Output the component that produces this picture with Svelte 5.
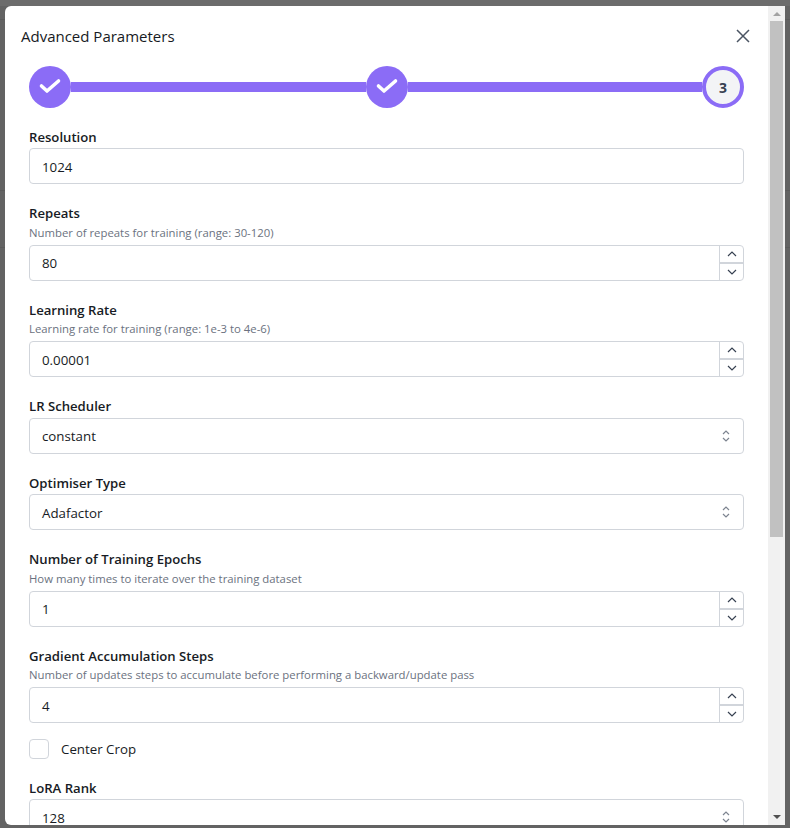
<script>
    const fields = [
        { label: "Resolution", value: "1024", kind: "text" },
        { label: "Repeats", help: "Number of repeats for training (range: 30-120)", value: "80", kind: "number" },
        { label: "Learning Rate", help: "Learning rate for training (range: 1e-3 to 4e-6)", value: "0.00001", kind: "number" },
        { label: "LR Scheduler", value: "constant", kind: "select" },
        { label: "Optimiser Type", value: "Adafactor", kind: "select" },
        { label: "Number of Training Epochs", help: "How many times to iterate over the training dataset", value: "1", kind: "number" },
        { label: "Gradient Accumulation Steps", help: "Number of updates steps to accumulate before performing a backward/update pass", value: "4", kind: "number" },
        { check: "Center Crop" },
        { label: "LoRA Rank", value: "128", kind: "select" }
    ];
</script>

<div class="backdrop">
    <div class="modal">
        <div class="content">
            <header>
                <h2>Advanced Parameters</h2>
                <svg class="close" width="14" height="14" viewBox="0 0 14 14"><path d="M1 1l12 12M13 1L1 13" stroke="#4b5563" stroke-width="1.5" fill="none" /></svg>
            </header>

            <div class="stepper">
                <span class="step done"><svg width="24" height="24" viewBox="0 0 24 24"><path d="M3.5 11l5.5 5L20.5 6" stroke="#fff" stroke-width="3.6" stroke-linecap="round" stroke-linejoin="round" fill="none" /></svg></span>
                <span class="line"></span>
                <span class="step done"><svg width="24" height="24" viewBox="0 0 24 24"><path d="M3.5 11l5.5 5L20.5 6" stroke="#fff" stroke-width="3.6" stroke-linecap="round" stroke-linejoin="round" fill="none" /></svg></span>
                <span class="line"></span>
                <span class="step current">3</span>
            </div>

            <div class="form">
                {#each fields as f}
                    {#if f.check}
                        <div class="check">
                            <span class="box"></span>
                            <span>{f.check}</span>
                        </div>
                    {:else}
                        <div class="field">
                            <div class="label">{f.label}</div>
                            {#if f.help}<div class="help">{f.help}</div>{/if}
                            <div class="control">
                                <span class="value">{f.value}</span>
                                {#if f.kind === "number"}
                                    <div class="spin">
                                        <span class="spin-btn"><svg width="10" height="6" viewBox="0 0 10 6"><path d="M1 5l4-4 4 4" stroke="#374151" stroke-width="1.2" fill="none" /></svg></span>
                                        <span class="spin-btn lower"><svg width="10" height="6" viewBox="0 0 10 6"><path d="M1 1l4 4 4-4" stroke="#374151" stroke-width="1.2" fill="none" /></svg></span>
                                    </div>
                                {:else if f.kind === "select"}
                                    <svg class="updown" width="10" height="14" viewBox="0 0 10 14"><path d="M2 5L5 2 8 5M2 9L5 12 8 9" stroke="#7d8490" stroke-width="1.2" fill="none" /></svg>
                                {/if}
                            </div>
                        </div>
                    {/if}
                {/each}
            </div>
        </div>

        <div class="scrollbar">
            <span class="arrow up"></span>
            <span class="thumb"></span>
            <span class="arrow down"></span>
        </div>
    </div>
</div>

<style>
    :global(body) {
        background: #636363;
        overflow: hidden;
    }

    .backdrop {
        height: 828px;
        box-sizing: border-box;
        padding: 6px 5px 3px 5px;
        font-family: "Open Sans", "Noto Sans", sans-serif;
        color: #171b24;
        /* faint page showing through the overlay */
        background:
            linear-gradient(#6c6c6c, #6c6c6c) 0 0 / 100% 6px no-repeat,
            linear-gradient(#5b5b5b, #5b5b5b) 0 19px / 100% 1px no-repeat,
            linear-gradient(#5b5b5b, #5b5b5b) 0 190px / 100% 1px no-repeat,
            linear-gradient(#5b5b5b, #5b5b5b) 0 247px / 100% 1px no-repeat;
    }

    .modal {
        display: flex;
        height: 100%;
        background: #fff;
        border-radius: 6px 0 0 6px;
        overflow: hidden;
    }

    .content {
        flex: 1;
        min-width: 0;
        overflow: hidden;
        padding: 0 24px;
    }

    header {
        display: flex;
        align-items: center;
        justify-content: space-between;
        height: 60px;
        margin-left: -8px;
        margin-right: -6px;
    }

    h2 {
        margin: 0;
        font-size: 15px;
        font-weight: 400;
    }

    .stepper {
        display: flex;
        align-items: center;
    }

    .step {
        flex: none;
        box-sizing: border-box;
        width: 42px;
        height: 42px;
        border-radius: 50%;
        display: flex;
        align-items: center;
        justify-content: center;
    }

    .step.done {
        background: #8b6cf6;
    }

    .step.current {
        background: #f3f4f6;
        border: 4px solid #8b6cf6;
        font-size: 14px;
        font-weight: 700;
        color: #374151;
    }

    .line {
        flex: 1;
        height: 10px;
        background: #8b6cf6;
    }

    .form {
        display: flex;
        flex-direction: column;
        gap: 19.5px;
        margin-top: 19px;
    }

    .label {
        font-size: 13.15px;
        font-weight: 600;
        line-height: 20px;
        margin-top: -0.5px;
        margin-bottom: 1.5px;
    }

    .help {
        font-size: 11.35px;
        line-height: 16px;
        color: #6b7280;
        margin-bottom: 4px;
    }

    .control {
        display: flex;
        align-items: center;
        justify-content: space-between;
        box-sizing: border-box;
        height: 36px;
        border: 1px solid #d1d5db;
        border-radius: 4px;
        padding-left: 12px;
        font-size: 13.3px;
    }

    .value {
        padding-top: 1px;
    }

    .spin {
        display: flex;
        flex-direction: column;
        align-self: stretch;
        width: 23px;
        border-left: 1px solid #d1d5db;
    }

    .spin-btn {
        flex: 1;
        display: flex;
        align-items: center;
        justify-content: center;
    }

    .spin-btn.lower {
        border-top: 2px solid #d1d5db;
    }

    .updown {
        margin-right: 12px;
    }

    .check {
        display: flex;
        align-items: center;
        gap: 12px;
        margin-top: -3.5px;
        margin-bottom: -0.5px;
        font-size: 13.3px;
        height: 20px;
    }

    .box {
        box-sizing: border-box;
        width: 20px;
        height: 20px;
        border: 1px solid #d1d5db;
        border-radius: 4px;
    }

    .scrollbar {
        flex: none;
        width: 17px;
        background: #f1f1f1;
        display: flex;
        flex-direction: column;
        align-items: center;
        position: relative;
    }

    .thumb {
        width: 13px;
        height: 516px;
        margin-top: 5px;
        background: #c1c1c1;
    }

    .arrow {
        width: 0;
        height: 0;
        border-left: 4px solid transparent;
        border-right: 4px solid transparent;
    }

    .arrow.up {
        margin-top: 6px;
        border-bottom: 4px solid #a3a3a3;
    }

    .arrow.down {
        margin-top: auto;
        margin-bottom: 6px;
        border-top: 4px solid #505050;
    }
</style>
